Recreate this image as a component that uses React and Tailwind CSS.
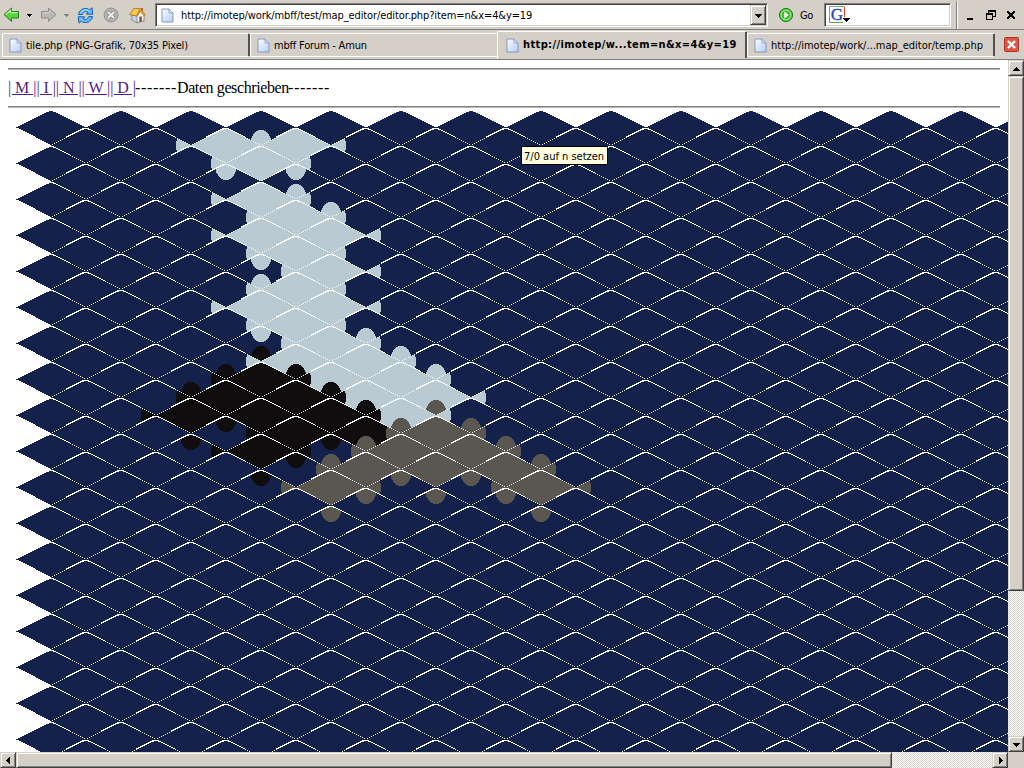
import React from "react";

const COLORS = ["#13214b", "#b9cad2", "#100d0e", "#5a5650"];

const TERRAIN = {
  1: "5,1 7,1 6,2 6,4 7,5 8,6 6,6 7,7 8,8 7,9 6,10 8,10 7,11 8,12 7,13 9,13 10,14 8,14 11,15 9,15 10,16",
  2: "6,14 5,15 7,15 4,16 6,16 8,16 7,17 9,17 6,18",
  3: "11,17 10,18 12,18 9,19 11,19 13,19 8,20 14,20",
};

const types = {};
Object.entries(TERRAIN).forEach(([type, list]) =>
  list.split(" ").forEach((key) => {
    types[key] = Number(type);
  })
);
const typeAt = (k, r) => types[`${k},${r}`] || 0;

function tileInset(i) {
  if (i === 0) return 33;
  if (i <= 16) return 32 - 2 * i;
  if (i <= 25) return 2 * (i - 16) + 1;
  return 2 * (i - 16);
}

let TILE = "";
for (let i = 0; i < 34; i++) {
  const left = tileInset(i);
  const right = 70 - left - (i >= 17 && i <= 25 ? 1 : 0);
  TILE += `M${left} ${i}H${right}V${i + 1}H${left}Z`;
}

const CORNERS = [
  { dk: 0, dr: 2, cx: 35, cy: 35, rx: 11, ry: 16 },
  { dk: 0, dr: -2, cx: 35, cy: 0, rx: 11, ry: 15 },
  { dk: 2, dr: 0, cx: 70, cy: 16.7, rx: 15.5, ry: 13 },
  { dk: -2, dr: 0, cx: 0, cy: 16.7, rx: 15.5, ry: 13 },
];

function IsoMap() {
  const tiles = [];
  for (let r = 0; r < 36; r++) {
    for (let k = r % 2; k < 29; k += 2) {
      const own = typeAt(k, r);
      const bumps = CORNERS.map((c) => ({ ...c, t: typeAt(k + c.dk, r + c.dr) })).filter((c) => c.t > own);
      tiles.push(
        <g key={`${k},${r}`} transform={`translate(${35 * k} ${18 * r})`}>
          <path d={TILE} fill={COLORS[own]} />
          {bumps.length > 0 && (
            <g clipPath="url(#tile)">
              {bumps.map((b, i) => (
                <ellipse key={i} cx={b.cx} cy={b.cy} rx={b.rx} ry={b.ry} fill={COLORS[b.t]} />
              ))}
            </g>
          )}
        </g>
      );
    }
  }
  return (
    <svg width="992" height="641" viewBox="0 0 992 641" shapeRendering="crispEdges" className="block">
      <defs>
        <clipPath id="tile">
          <path d={TILE} />
        </clipPath>
      </defs>
      {tiles}
    </svg>
  );
}

function PageIcon() {
  return (
    <svg width="13" height="15" viewBox="0 0 13 15" className="block shrink-0">
      <defs>
        <linearGradient id="pg" x1="0" y1="0" x2="1" y2="1">
          <stop offset="0" stopColor="#fff" />
          <stop offset="1" stopColor="#b4cdf6" />
        </linearGradient>
      </defs>
      <path d="M1 1H8L12 5V14H1Z" fill="url(#pg)" stroke="#8597c8" />
      <path d="M8 1V5H12Z" fill="#dfe9fb" stroke="#8597c8" strokeWidth=".8" />
    </svg>
  );
}

function GreenArrow() {
  return (
    <svg width="18" height="16" viewBox="0 0 18 16" className="block shrink-0">
      <path d="M1 7.5L8.5 1V4.5H15.5V11H8.5V14.5Z" fill="#56d33c" stroke="#237f1b" strokeLinejoin="round" />
      <path d="M3 7.3L7.5 3.5V5.7H14.5" fill="none" stroke="#b6f39c" strokeWidth="1.3" />
    </svg>
  );
}

function GrayArrow() {
  return (
    <svg width="18" height="16" viewBox="0 0 18 16" className="block shrink-0">
      <path d="M16 7.5L8.5 1V4.5H1.5V11H8.5V14.5Z" fill="#b9b8b5" stroke="#8f8e8b" strokeLinejoin="round" />
      <path d="M2.7 5.8H9.7V3.7" fill="none" stroke="#d8d7d4" />
    </svg>
  );
}

function Caret({ color }) {
  return (
    <svg width="5" height="3" viewBox="0 0 5 3" shapeRendering="crispEdges" className="block shrink-0">
      <path d="M0 0H5V1H4V2H3V3H2V2H1V1H0Z" fill={color} />
    </svg>
  );
}

function Reload() {
  return (
    <svg width="17" height="17" viewBox="0 0 17 17" className="block shrink-0">
      <path d="M1.5 7.5C2 3.5 6 .5 10.5 1.6L12.5 2.8L15 .8L15.8 7.2H9.3L11 5.1C8.5 3.8 6.3 5 5.3 7.5Z" fill="#63b5f4" stroke="#1b5fb8" strokeLinejoin="round" />
      <path d="M15.5 9.5C15 13.5 11 16.5 6.5 15.4L4.5 14.2L2 16.2L1.2 9.8H7.7L6 11.9C8.5 13.2 10.7 12 11.7 9.5Z" fill="#63b5f4" stroke="#1b5fb8" strokeLinejoin="round" />
      <path d="M3.3 6.3C4.5 3.8 7 2.4 10 3L12.8 4.2M4 11.5L6 14" fill="none" stroke="#bce5ff" />
    </svg>
  );
}

function Stop() {
  return (
    <svg width="16" height="16" viewBox="0 0 16 16" className="block shrink-0">
      <circle cx="8" cy="8" r="7" fill="#b1b0ae" stroke="#93928f" />
      <path d="M5.2 5.2L10.8 10.8M10.8 5.2L5.2 10.8" stroke="#8c8b88" strokeWidth="3.6" />
      <path d="M5.2 5.2L10.8 10.8M10.8 5.2L5.2 10.8" stroke="#eeedea" strokeWidth="2" />
    </svg>
  );
}

function Home() {
  return (
    <svg width="17" height="17" viewBox="0 0 17 17" className="block shrink-0">
      <path d="M7 9L11.3 3.6L15 8.5V13.8L8 15.8Z" fill="#f8f9fc" stroke="#6d7183" strokeWidth=".8" />
      <path d="M2.8 8.2V13L8 15.8V9Z" fill="#c9d4ea" stroke="#6d7183" strokeWidth=".7" />
      <path d="M12 .9H14V5L12 2.6Z" fill="#c35233" />
      <path d="M4.5 1.7L11.3 1.3L7.6 8.9L.7 7.6Z" fill="#f9c940" stroke="#a8701d" strokeWidth=".8" />
      <path d="M11.3 1.5L16.2 7.8L15 8.6L11.2 3.9L8.2 9.2" fill="none" stroke="#c98b25" strokeWidth="1.1" />
      <path d="M10.3 15V9.8L12.8 9.3V14.4Z" fill="#8f4c27" />
    </svg>
  );
}

const TXT = "whitespace-pre font-['DejaVu_Sans_Condensed','DejaVu_Sans',sans-serif] text-[11px] leading-[14px] [font-stretch:condensed]";
const RAISED = "flex shrink-0 items-center justify-center border border-t-[#d4d0c8] border-l-[#d4d0c8] border-r-[#404040] border-b-[#404040] bg-[#d4d0c8] shadow-[inset_1px_1px_0_#fff,inset_-1px_-1px_0_#808080]";
const DITHER = "bg-[repeating-conic-gradient(#fff_0_25%,#d4d0c8_0_50%)] bg-[length:2px_2px]";

function Arrow({ d }) {
  return (
    <svg width="7" height="7" viewBox="0 0 7 7" shapeRendering="crispEdges" className="block">
      <path d={d} />
    </svg>
  );
}

function Tab({ label, className, textClass }) {
  return (
    <div className={`flex shrink-0 items-center border-t border-l border-white ${className}`}>
      <PageIcon />
      <span className={`${TXT} ${textClass}`}>{label}</span>
    </div>
  );
}

export default function App() {
  return (
    <div className="flex h-[768px] w-[1024px] flex-col overflow-hidden bg-[#d4d0c8] text-black">
      <div className="flex h-[30px] shrink-0 items-center border-b border-[#808080] pt-px pl-[3px]">
        <GreenArrow />
        <div className="ml-[6px]"><Caret color="#000" /></div>
        <div className="ml-[8px]"><GrayArrow /></div>
        <div className="ml-[6px]"><Caret color="#808080" /></div>
        <div className="ml-[8px]"><Reload /></div>
        <div className="ml-[9px]"><Stop /></div>
        <div className="ml-[10px]"><Home /></div>
        <div className="ml-[9px] flex h-[24px] w-[613px] shrink-0 items-center border border-t-[#808080] border-l-[#808080] border-r-white border-b-white bg-white pl-[5px] shadow-[inset_1px_1px_0_#404040,inset_-1px_-1px_0_#d4d0c8]">
          <PageIcon />
          <span className={`${TXT} ml-[7px] w-[569px] pt-px tracking-[-0.11px]`}>http://imotep/work/mbff/test/map_editor/editor.php?item=n&amp;x=4&amp;y=19</span>
          <div className={`${RAISED} h-[20px] w-[16px]`}>
            <Arrow d="M0 2H7V3H6V4H5V5H4V6H3V5H2V4H1V3H0Z" />
          </div>
        </div>
        <svg width="16" height="16" viewBox="0 0 16 16" className="ml-[10px] block shrink-0">
          <circle cx="8" cy="8" r="6.6" fill="#45bb35" stroke="#207c1b" />
          <circle cx="8" cy="8" r="5" fill="none" stroke="#b8eea8" />
          <path d="M6.3 4.5L11 8L6.3 11.5Z" fill="#fff" />
        </svg>
        <span className={`${TXT} ml-[6px] w-[24px] pt-px tracking-[-0.5px]`}>Go</span>
        <div className="flex h-[24px] w-[127px] shrink-0 items-center border border-t-[#808080] border-l-[#808080] border-r-white border-b-white bg-white pl-[4px] shadow-[inset_1px_1px_0_#404040,inset_-1px_-1px_0_#d4d0c8]">
          <svg width="22" height="18" viewBox="0 0 22 18" className="block">
            <path d="M.5 16.5V.5H15.5" fill="none" stroke="#7299df" />
            <path d="M5 .5H15" stroke="#6ab36c" />
            <path d="M15.5 1V11" stroke="#e33a30" />
            <path d="M.5 12V16.5H14" fill="none" stroke="#54a65a" />
            <text x="1.8" y="13.8" fontFamily="Liberation Serif, serif" fontSize="17" fill="#1c43bd" stroke="#1c43bd" strokeWidth=".3">G</text>
            <path d="M14 12H21V13H20V14H19V15H18V16H17V15H16V14H15V13H14Z" shapeRendering="crispEdges" />
          </svg>
        </div>
        <div className="ml-[5px] h-[28px] w-[2px] border-l border-[#808080] bg-white" />
        <svg width="60" height="20" viewBox="0 0 60 20" shapeRendering="crispEdges" className="block shrink-0">
          <path d="M9 13H15V15H9Z" />
          <path d="M30 5H38V12H35V15H28V8H30ZM31 7V8H35V11H37V7ZM29 10V14H34V10Z" fillRule="evenodd" />
          <path d="M49 6H51L53 8.500L55 6H57V7L54.500 10L57 13V14H55L53 11.500L51 14H49V13L51.500 10L49 7Z" />
        </svg>
      </div>

      <div className="flex h-[30px] shrink-0 items-start border-b border-[#808080] pl-[2px]">
        <Tab label="tile.php (PNG-Grafik, 70x35 Pixel)" className="mt-[3px] h-[24px] w-[246px] rounded-tl-[2px] border-b pl-[6px]" textClass="ml-[4px] pt-px tracking-[-0.13px]" />
        <div className="mt-[4px] h-[22px] w-[2px] bg-[#505050]" />
        <Tab label="mbff Forum - Amun" className="mt-[3px] h-[24px] w-[247px] border-b pl-[6px]" textClass="ml-[4px] pt-px tracking-[-0.2px]" />
        <Tab label="http://imotep/w...tem=n&amp;x=4&amp;y=19" className="mt-px h-[28px] w-[248px] rounded-tl-[2px] pb-px pl-[8px]" textClass="ml-[4px] font-bold tracking-[0.38px]" />
        <div className="mt-[2px] h-[26px] w-[2px] bg-[#505050]" />
        <Tab label="http://imotep/work/...map_editor/temp.php" className="mt-[3px] h-[24px] w-[246px] border-b pl-[6px]" textClass="ml-[4px] pt-px tracking-[-0.01px]" />
        <div className="mt-[4px] h-[22px] w-[2px] bg-[#505050]" />
        <svg width="15" height="15" viewBox="0 0 15 15" className="mt-[7px] ml-[9px] block shrink-0">
          <rect x=".5" y=".5" width="14" height="14" rx="1" fill="#dd5747" stroke="#ae3023" />
          <path d="M4 4L11 11M11 4L4 11" stroke="#fff" strokeWidth="2.4" />
        </svg>
      </div>

      <div className="flex h-[692px] shrink-0">
        <div className="relative flex w-[1008px] shrink-0 flex-col overflow-hidden bg-white">
          <div className="mt-[8px] ml-[8px] h-[2px] w-[992px] shrink-0 border-t border-[#808080] bg-[#b5b5b5]" />
          <div className="ml-[8px] flex h-[36px] shrink-0 items-center font-['Liberation_Serif',serif] text-[16px] leading-[18px] whitespace-pre">
            <a className="w-[127px] tracking-[-0.05px] text-[#551a8b] underline">| M || I || N || W || D |</a>
            <span className="w-[42px] tracking-[0.67px]">-------</span>
            <span className="w-[111px] tracking-[-0.4px]">Daten geschrieben</span>
            <span className="tracking-[0.67px]">-------</span>
          </div>
          <div className="ml-[8px] h-[2px] w-[992px] shrink-0 border-t border-[#808080] bg-[#b5b5b5]" />
          <div className="mt-[3px] ml-[16px] h-[641px] w-[992px] shrink-0">
            <IsoMap />
          </div>
          <div className={`${TXT} absolute top-[86px] left-[521px] flex h-[19px] w-[87px] items-center border border-black bg-[#ffffe1] pt-[2px] pl-[2px]`}>
            7/0 auf n setzen
          </div>
        </div>
        <div className={`flex w-[16px] shrink-0 flex-col ${DITHER}`}>
          <div className={`${RAISED} h-[16px]`}>
            <Arrow d="M3 2H4V3H5V4H6V5H7V6H0V5H1V4H2V3H3Z" />
          </div>
          <div className={`${RAISED} h-[515px]`} />
          <div className="flex-1" />
          <div className={`${RAISED} h-[16px]`}>
            <Arrow d="M0 2H7V3H6V4H5V5H4V6H3V5H2V4H1V3H0Z" />
          </div>
        </div>
      </div>

      <div className="flex h-[16px] shrink-0">
        <div className={`flex w-[1008px] ${DITHER}`}>
          <div className={`${RAISED} w-[16px]`}>
            <Arrow d="M5 0V7H4V6H3V5H2V4H1V3H2V2H3V1H4V0Z" />
          </div>
          <div className={`${RAISED} w-[876px]`} />
          <div className="flex-1" />
          <div className={`${RAISED} w-[16px]`}>
            <Arrow d="M2 0V7H3V6H4V5H5V4H6V3H5V2H4V1H3V0Z" />
          </div>
        </div>
        <div className="w-[16px] bg-[#d4d0c8]" />
      </div>
    </div>
  );
}
